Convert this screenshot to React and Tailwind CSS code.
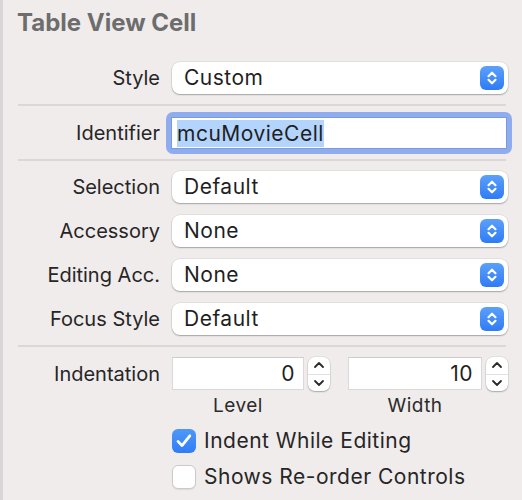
import React from 'react';

const font = { fontFamily: 'Inter, "Liberation Sans", sans-serif' };

const Chevrons = () => (
    <svg width="24" height="24" viewBox="0 0 24 24" fill="none">
        <path d="M8.5 10.2 L12 6.7 L15.5 10.2" stroke="white" strokeWidth="2.2" strokeLinecap="round" strokeLinejoin="round" />
        <path d="M8.5 13.8 L12 17.3 L15.5 13.8" stroke="white" strokeWidth="2.2" strokeLinecap="round" strokeLinejoin="round" />
    </svg>
);

const Popup = ({ value }) => (
    <div className="flex items-center justify-between h-[32px] w-[336px] bg-white rounded-[8px] pl-[12px] pr-[4px] shadow-[0_1px_1.5px_rgba(0,0,0,0.28),0_0_0_0.5px_rgba(0,0,0,0.1)]">
        <span className="text-[21px] tracking-[0.5px] leading-[24px] text-[#1f1f1f]">{value}</span>
        <div className="w-[24px] h-[24px] rounded-[6px] bg-gradient-to-b from-[#5ba0fa] to-[#2e7bf6] flex items-center justify-center">
            <Chevrons />
        </div>
    </div>
);

const Row = ({ label, children }) => (
    <div className="flex items-center">
        <div className="w-[157px] text-right text-[20px] leading-[24px] text-[#262626]">{label}</div>
        <div className="ml-[12px]">{children}</div>
    </div>
);

const Separator = () => <div className="ml-[15px] mr-[16px] h-[2px] bg-[#dbd7d8]" />;

const Stepper = () => (
    <div className="w-[22px] h-[34px] bg-white rounded-[7px] flex flex-col shadow-[0_1px_1.5px_rgba(0,0,0,0.25),0_0_0_0.5px_rgba(0,0,0,0.1)]">
        <div className="flex-1 flex items-center justify-center border-b border-[#e4e0e1]">
            <svg width="12" height="8" viewBox="0 0 12 8" fill="none">
                <path d="M2 6 L6 2 L10 6" stroke="#2a2a2a" strokeWidth="1.8" strokeLinecap="round" strokeLinejoin="round" />
            </svg>
        </div>
        <div className="flex-1 flex items-center justify-center">
            <svg width="12" height="8" viewBox="0 0 12 8" fill="none">
                <path d="M2 2 L6 6 L10 2" stroke="#2a2a2a" strokeWidth="1.8" strokeLinecap="round" strokeLinejoin="round" />
            </svg>
        </div>
    </div>
);

const NumberField = ({ value, label, width }) => (
    <div className="flex flex-col items-center">
        <div className={`${width} h-[33px] bg-white flex items-center justify-end pr-[8px] border border-[#dcd8d9] border-t-[#cfcbcc]`}>
            <span className="text-[21px] tracking-[0.5px] leading-[24px] text-[#1f1f1f]">{value}</span>
        </div>
        <span className="mt-[4px] text-[19px] tracking-[0.5px] text-[#2b2b2b] leading-[24px]">{label}</span>
    </div>
);

const Checkbox = ({ checked, label }) => (
    <div className="flex items-center ml-[169px]">
        {checked ? (
            <div className="w-[24px] h-[24px] rounded-[6px] bg-gradient-to-b from-[#4f98f9] to-[#2f7cf6] flex items-center justify-center">
                <svg width="20" height="20" viewBox="0 0 20 20" fill="none">
                    <path d="M4 10.4 L8 14.6 L15.8 4.8" stroke="white" strokeWidth="2.8" strokeLinecap="round" strokeLinejoin="round" />
                </svg>
            </div>
        ) : (
            <div className="w-[24px] h-[24px] rounded-[6px] bg-white border border-[#cdc9ca] shadow-[0_1px_1px_rgba(0,0,0,0.08)]" />
        )}
        <span className="ml-[8px] text-[21px] tracking-[0.5px] leading-[24px] text-[#262626]">{label}</span>
    </div>
);

const App = () => {
    return (
        <div style={font} className="w-[522px] h-[500px] bg-[#f0ecec] border-l-[3px] border-[#dad6d7] flex flex-col overflow-hidden">
            <div className="h-[49px] pl-[14px] pt-[8px]">
                <h1 className="text-[24px] leading-[30px] font-bold text-[#6d6d6d]">Table View Cell</h1>
            </div>

            <div className="mt-[13px]">
                <Row label="Style"><Popup value="Custom" /></Row>
            </div>
            <div className="mt-[10px]"><Separator /></div>

            <div className="mt-[12px]">
                <Row label="Identifier">
                    <div className="-ml-[6px] -my-[6px] p-[5px] rounded-[7px] bg-[#8fadee]">
                        <div className="w-[336px] h-[32px] bg-white border border-[#7b9be0] flex items-center pl-[5px]">
                            <span className="text-[21px] tracking-[0.5px] text-[#1f1f1f] bg-[#b3d4fd] leading-[27px]">mcuMovieCell</span>
                        </div>
                    </div>
                </Row>
            </div>
            <div className="mt-[11px]"><Separator /></div>

            <div className="mt-[10px] flex flex-col gap-[12px]">
                <Row label="Selection"><Popup value="Default" /></Row>
                <Row label="Accessory"><Popup value="None" /></Row>
                <Row label="Editing Acc."><Popup value="None" /></Row>
                <Row label="Focus Style"><Popup value="Default" /></Row>
            </div>
            <div className="mt-[10px]"><Separator /></div>

            <div className="mt-[10px] flex items-start">
                <div className="w-[157px] h-[33px] flex items-center justify-end text-[20px] leading-[24px] text-[#262626]">Indentation</div>
                <div className="ml-[12px] flex items-start">
                    <NumberField value="0" label="Level" width="w-[132px]" />
                    <div className="ml-[4px]"><Stepper /></div>
                    <div className="ml-[18px]"><NumberField value="10" label="Width" width="w-[134px]" /></div>
                    <div className="ml-[4px]"><Stepper /></div>
                </div>
            </div>

            <div className="mt-[11px] flex flex-col gap-[12px]">
                <Checkbox checked label="Indent While Editing" />
                <Checkbox label="Shows Re-order Controls" />
            </div>
        </div>
    );
};

export default App;
